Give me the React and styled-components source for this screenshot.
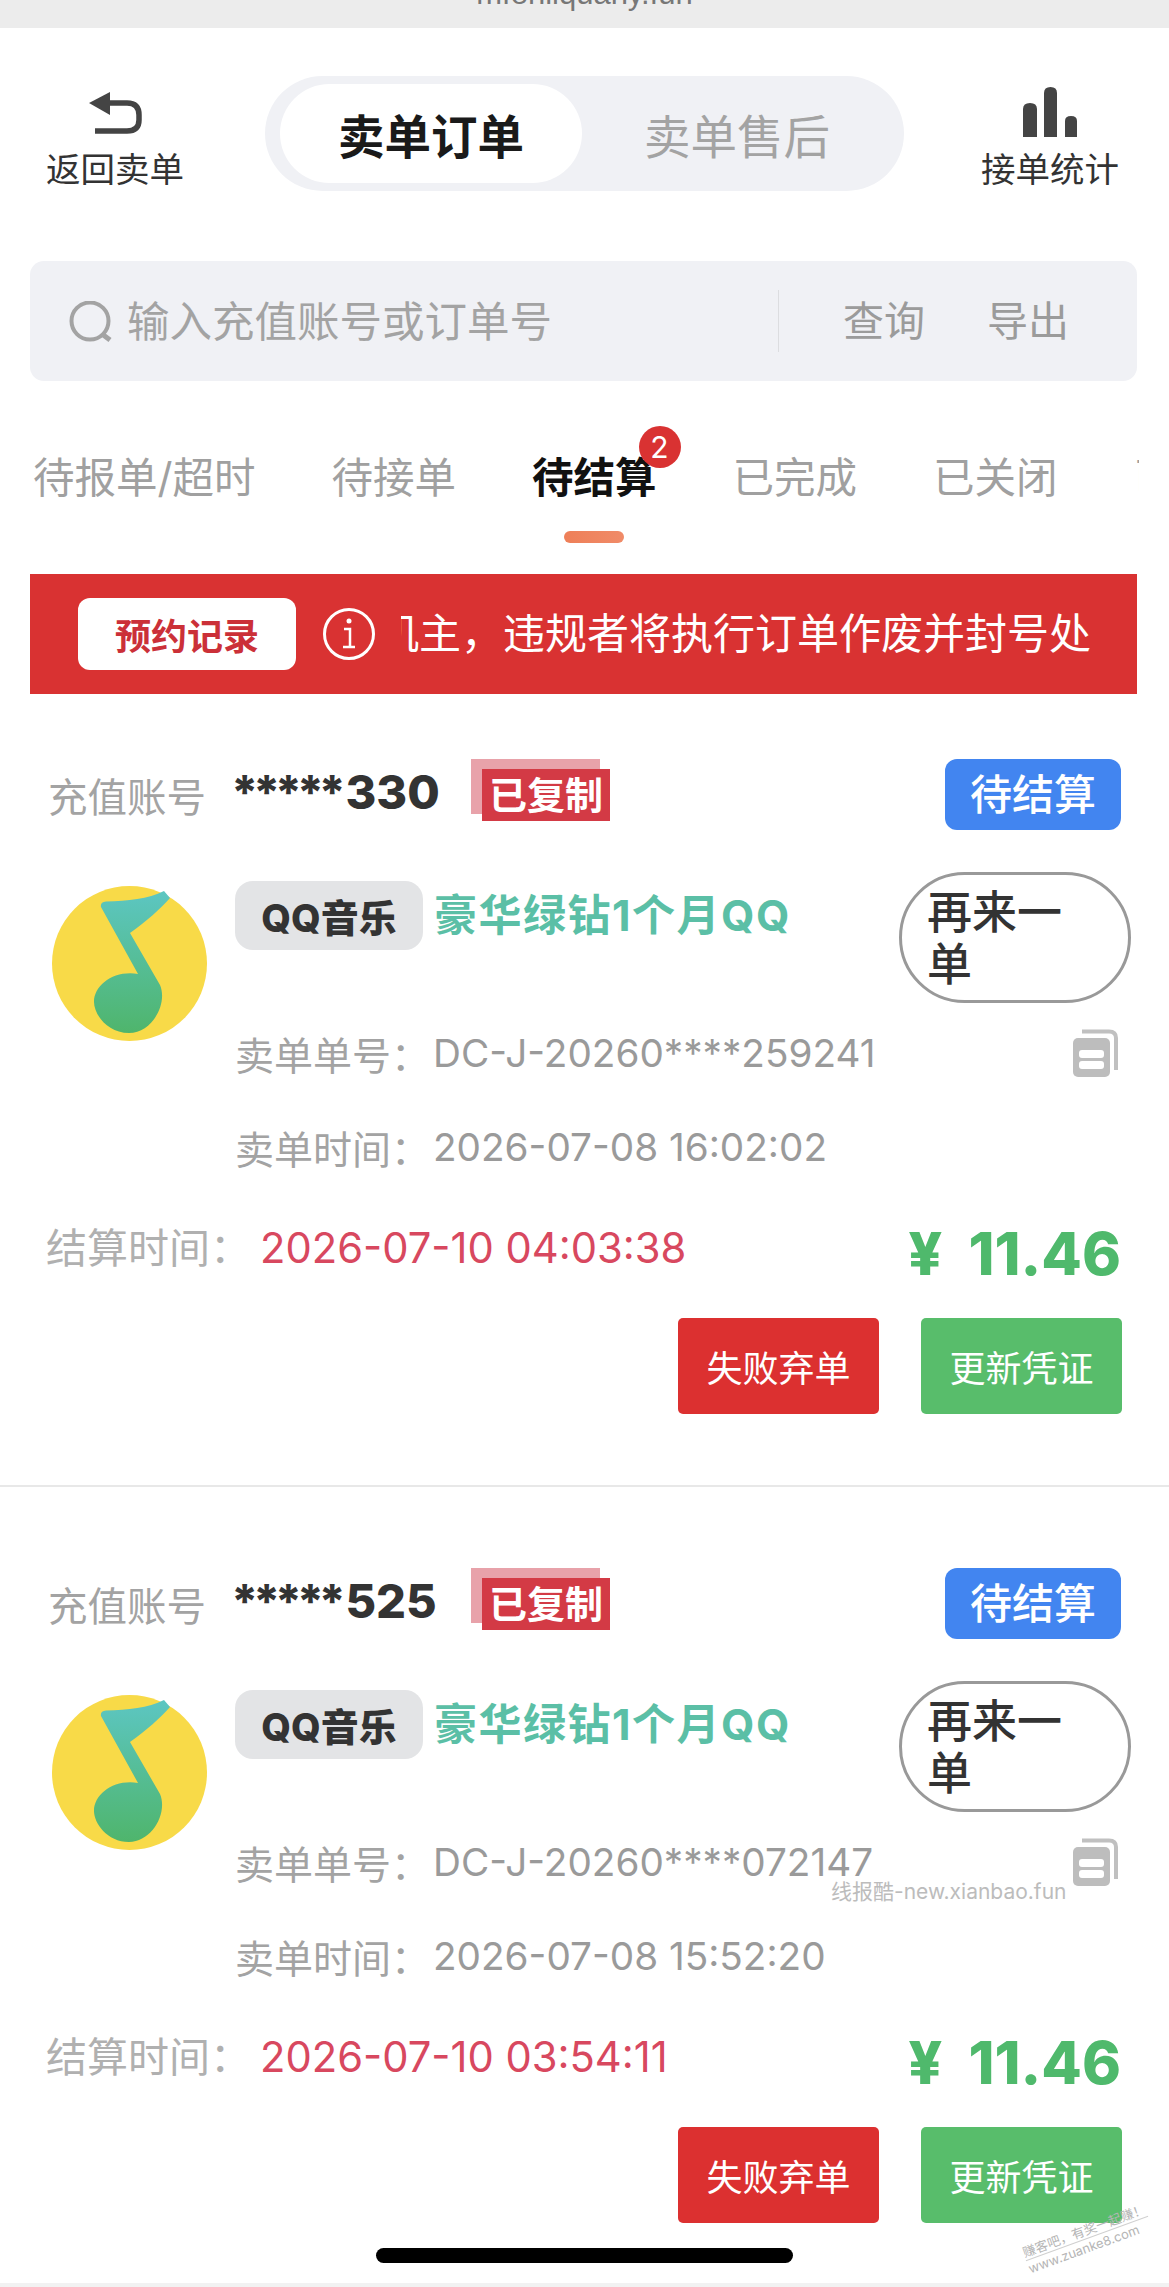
import React from 'react'
import styled, { createGlobalStyle } from 'styled-components'

const GlobalStyle = createGlobalStyle`
  html, body {
    margin: 0;
    padding: 0;
    background: #fff;
  }
  * {
    box-sizing: border-box;
  }
`

const Page = styled.div`
  position: relative;
  isolation: isolate;
  display: flex;
  flex-direction: column;
  width: 1169px;
  height: 2287px;
  overflow: hidden;
  background: #fff;
  color: #333;
  font-family: Inter, "Noto Sans CJK SC", sans-serif;
`

const UrlBar = styled.div`
  height: 28px;
  background: #ececec;
  overflow: hidden;
  text-align: center;
  font-size: 31px;
  line-height: 28px;
  color: #777;
  font-family: "Liberation Sans", sans-serif;

  span {
    display: block;
    margin-top: -20px;
  }
`

const Header = styled.div`
  display: flex;
  margin-top: 48px;
  padding-left: 46px;
`

const HeaderAction = styled.div`
  display: flex;
  flex-direction: column;
  align-items: center;
  flex-shrink: 0;
  width: 138px;
  height: 114px;
  font-size: 34.5px;
  line-height: 40px;
  color: #333;
  white-space: nowrap;
`

const ActionIcon = styled.div`
  display: flex;
  align-items: ${p => (p.$top ? 'flex-start' : 'center')};
  justify-content: center;
  height: ${p => (p.$top ? 77 : 74)}px;
  padding-top: ${p => (p.$top ? 11 : 0)}px;
`

const Segment = styled.div`
  display: flex;
  align-items: center;
  gap: 4px;
  width: 639px;
  height: 115px;
  margin: 0 77px 0 81px;
  padding-left: 15px;
  background: #f0f1f5;
  border-radius: 58px;
`

const SegmentItem = styled.div`
  display: flex;
  align-items: center;
  justify-content: center;
  flex-shrink: 0;
  width: 302px;
  height: 99px;
  border-radius: 50px;
  font-size: 46.5px;
  font-weight: ${p => (p.$active ? 700 : 400)};
  color: ${p => (p.$active ? '#1a1a1a' : '#a3a3a3')};
  background: ${p => (p.$active ? '#fff' : 'transparent')};
`

const SearchBar = styled.div`
  display: flex;
  align-items: center;
  height: 120px;
  margin: 70px 32px 0 30px;
  padding-left: 39px;
  background: #f0f1f5;
  border-radius: 14px;
  font-size: 42.5px;
  color: #a3a3a3;
`

const Placeholder = styled.div`
  width: 651px;
  margin: -6px 0 0 14px;
`

const SearchAction = styled.div`
  margin: -6px 0 0 ${p => p.$gap}px;
  font-size: 41px;
  color: #9b9b9b;
`

const SearchDivider = styled.div`
  width: 1px;
  height: 62px;
  background: #dcdde0;
`

const Tabs = styled.div`
  display: flex;
  gap: 76px;
  margin: 30px 30px 0 30px;
  padding: 42px 0 0 3px;
  overflow: hidden;
`

const Tab = styled.div`
  position: relative;
  display: flex;
  flex-direction: column;
  align-items: center;
  flex-shrink: 0;
  gap: 28px;
  font-size: 41.5px;
  line-height: 50px;
  white-space: nowrap;
  font-weight: ${p => (p.$active ? 700 : 400)};
  color: ${p => (p.$active ? '#111' : '#a0a0a0')};
`

const TabBar = styled.div`
  width: 60px;
  height: 12px;
  border-radius: 6px;
  background: ${p => (p.$active ? 'linear-gradient(90deg, #ee7f58, #f08b68)' : 'transparent')};
`

const TabBadge = styled.div`
  position: absolute;
  top: -27px;
  right: -24px;
  width: 42px;
  height: 42px;
  border-radius: 50%;
  background: #d93232;
  color: #fff;
  font-size: 30px;
  font-weight: 400;
  line-height: 42px;
  text-align: center;
`

const Notice = styled.div`
  display: flex;
  align-items: center;
  height: 120px;
  margin: 31px 32px 0 30px;
  padding-left: 48px;
  background: #d93232;
`

const NoticeButton = styled.div`
  display: flex;
  align-items: center;
  justify-content: center;
  width: 218px;
  height: 72px;
  margin-right: 27px;
  background: #fff;
  border-radius: 12px;
  color: #cb3038;
  font-size: 36px;
  font-weight: 700;
`

const Marquee = styled.div`
  width: 689px;
  margin-left: 26px;
  overflow: hidden;
  white-space: nowrap;
  color: #fff;
  font-size: 42px;
  line-height: 60px;

  span {
    display: block;
    margin-left: -24px;
  }
`

const Card = styled.div`
  padding: 65px 0 71px;
  border-bottom: 2px solid #e8e8e8;

  & + & {
    padding-top: 81px;
    padding-bottom: 0;
    border-bottom: 0;
  }
`

const CardHead = styled.div`
  display: flex;
  align-items: center;
  height: 71px;
  padding: 0 48px;
`

const HeadLabel = styled.div`
  font-size: 39.5px;
  color: #a3a3a3;
`

const Account = styled.div`
  display: flex;
  width: 204px;
  margin: -6px 0 0 25px;
  font-size: 47px;
  font-weight: 800;
  color: #333;
`

const Mask = styled.span`
  letter-spacing: -5.5px;
  margin-right: 5px;
`

const Stamp = styled.div`
  position: relative;
  width: 128px;
  height: 52px;
  margin: 0 0 0 47px;
  background: #d33a45;
  color: #fff;
  font-size: 38px;
  font-weight: 700;
  line-height: 52px;
  text-align: center;
  white-space: nowrap;

  &::before {
    content: '';
    position: absolute;
    z-index: -1;
    top: -10px;
    left: -11px;
    width: 129px;
    height: 55px;
    background: #e8a2aa;
  }
`

const Status = styled.div`
  margin-left: auto;
  width: 176px;
  height: 71px;
  background: #4285f0;
  border-radius: 12px;
  color: #fff;
  font-size: 42px;
  font-weight: 500;
  line-height: 71px;
  text-align: center;
`

const CardBody = styled.div`
  display: flex;
  gap: 28px;
  margin-top: 42px;
  padding: 0 38px 0 52px;
`

const Logo = styled.svg`
  flex-shrink: 0;
  margin-top: 14px;
`

const Info = styled.div`
  flex: 1;
`

const ProductRow = styled.div`
  display: flex;
  align-items: flex-start;
  height: 131px;
`

const Tag = styled.div`
  display: flex;
  align-items: center;
  justify-content: center;
  width: 188px;
  height: 69px;
  margin-top: 9px;
  background: #e3e4e6;
  border-radius: 18px;
  color: #333;
  font-size: 38px;
  font-weight: 800;
`

const Product = styled.div`
  margin: 9px 0 0 11px;
  font-size: 43px;
  font-weight: 700;
  line-height: 69px;
  color: #5bbfa6;
  letter-spacing: 1.5px;
  white-space: nowrap;
`

const Again = styled.div`
  flex-shrink: 0;
  width: 232px;
  height: 131px;
  margin-left: auto;
  padding: 12px 29px 12px 25px;
  border: 3px solid #999;
  border-radius: 66px;
  color: #333;
  font-size: 45px;
  font-weight: 500;
  line-height: 52px;
`

const MetaRow = styled.div`
  display: flex;
  align-items: center;
  height: 94px;
  margin-top: ${p => (p.$first ? 3 : 0)}px;
  font-size: 39px;
  color: #a3a3a3;
`

const MetaValue = styled.div`
  margin-left: 3px;
  font-size: 38.7px;
  color: #9a9a9a;
`

const CopyIcon = styled.svg`
  margin: 0 13px 0 auto;
`

const SettleRow = styled.div`
  display: flex;
  align-items: flex-start;
  height: 84px;
  margin-top: 20px;
  padding: 0 48px 0 46px;
`

const SettleLabel = styled.div`
  font-size: 41px;
  line-height: 68px;
  color: #b0b0b0;
`

const SettleValue = styled.div`
  margin-left: 9px;
  font-size: 41.7px;
  line-height: 68px;
  color: #d8485f;
`

const Price = styled.div`
  display: flex;
  gap: 26px;
  margin-left: auto;
  font-size: 59px;
  font-weight: 800;
  line-height: 80px;
  color: #4fb96c;
`

const Buttons = styled.div`
  display: flex;
  justify-content: flex-end;
  gap: 42px;
  margin-top: 20px;
  padding-right: 47px;
`

const ActionButton = styled.div`
  display: flex;
  align-items: center;
  justify-content: center;
  width: 201px;
  height: 96px;
  border-radius: 5px;
  color: #fff;
  font-size: 36px;
  background: ${p => (p.$danger ? '#dc3030' : '#58bd6b')};
`

const HomeIndicator = styled.div`
  position: absolute;
  left: 376px;
  bottom: 24px;
  width: 417px;
  height: 15px;
  border-radius: 8px;
  background: #000;
`

const BottomStrip = styled.div`
  margin-top: auto;
  height: 4px;
  background: #f2f2f2;
`

const SourceMark = styled.div`
  position: absolute;
  left: 831px;
  top: 1878px;
  font-size: 21px;
  line-height: 28px;
  color: #bcbcbc;
  white-space: nowrap;
`

const CornerMark = styled.div`
  position: absolute;
  left: 1022px;
  top: 2222px;
  width: 130px;
  transform: rotate(-20deg);
  font-size: 13px;
  line-height: 16px;
  color: #b5b5b5;
  white-space: nowrap;

  div:first-child {
    border-bottom: 1px solid #d0d0d0;
  }
`

const BackIcon = () => (
  <svg width="53" height="42" viewBox="0 0 53 42">
    <path d="M0 11 L21 0 V23 Z" fill="#444" />
    <path
      d="M17 11 H38 Q50 11 50 23 V28 Q50 39 38 39 H6"
      fill="none"
      stroke="#444"
      strokeWidth="5.5"
    />
  </svg>
)

const BarsIcon = () => (
  <svg width="55" height="50" viewBox="0 0 55 50">
    <path d="M0 50 V22 Q0 16 7 16 Q14 16 14 22 V50 Z" fill="#444" />
    <path d="M21 50 V6 Q21 0 27.5 0 Q34 0 34 6 V50 Z" fill="#444" />
    <path d="M42 50 V34 Q42 29 48 29 Q54 29 54 34 V50 Z" fill="#444" />
  </svg>
)

const SearchIcon = () => (
  <svg width="44" height="41" viewBox="0 0 44 41">
    <circle cx="21" cy="20" r="18.5" fill="none" stroke="#a3a3a3" strokeWidth="4" />
    <path d="M33 33 L41 39" stroke="#a3a3a3" strokeWidth="5" />
  </svg>
)

const InfoIcon = () => (
  <svg width="52" height="54" viewBox="0 0 52 54">
    <circle cx="26" cy="27" r="24.5" fill="none" stroke="#fff" strokeWidth="3" />
    <circle cx="26" cy="14" r="2.5" fill="#fff" />
    <path d="M21 22 H27 V39 M20 40 H32" fill="none" stroke="#fff" strokeWidth="2.5" />
  </svg>
)

const QQMusicLogo = ({ id }) => (
  <Logo width="155" height="155" viewBox="0 0 155 155">
    <defs>
      <linearGradient id={id} x1="0" y1="5" x2="0" y2="147" gradientUnits="userSpaceOnUse">
        <stop offset="0" stopColor="#5cc6c2" />
        <stop offset="1" stopColor="#4fb56c" />
      </linearGradient>
    </defs>
    <circle cx="77.5" cy="77.5" r="77.5" fill="#f8da48" />
    <path
      d="M49 21 Q48 16 54 15.5 C76 15 96 13 112 5 L118 12 C108 23 95 35 78 47 L108 99 C116 118 100 147 77 147 C55 147 42 128 42 116 C42 99 62 84 86 88 Z"
      fill={`url(#${id})`}
    />
  </Logo>
)

const CopyGlyph = () => (
  <CopyIcon width="45" height="48" viewBox="0 0 45 48">
    <path d="M9 2.5 H36 Q43 2.5 43 9 V41" fill="none" stroke="#c0c0c0" strokeWidth="4" />
    <rect x="0" y="9" width="37" height="39" rx="5" fill="#bdbdbd" />
    <rect x="6" y="21" width="25" height="8" rx="3" fill="#fff" />
    <rect x="6" y="32" width="25" height="8" rx="3" fill="#fff" />
  </CopyIcon>
)

const orders = [
  {
    account: '330',
    no: 'DC-J-20260****259241',
    time: '2026-07-08 16:02:02',
    settle: '2026-07-10 04:03:38'
  },
  {
    account: '525',
    no: 'DC-J-20260****072147',
    time: '2026-07-08 15:52:20',
    settle: '2026-07-10 03:54:11'
  }
]

const tabs = ['待报单/超时', '待接单', '待结算', '已完成', '已关闭', '已取消']

const Order = ({ order, index }) => (
  <Card>
    <CardHead>
      <HeadLabel>充值账号</HeadLabel>
      <Account>
        <Mask>*****</Mask>
        {order.account}
      </Account>
      <Stamp>已复制</Stamp>
      <Status>待结算</Status>
    </CardHead>
    <CardBody>
      <QQMusicLogo id={`note-${index}`} />
      <Info>
        <ProductRow>
          <Tag>QQ音乐</Tag>
          <Product>豪华绿钻1个月QQ</Product>
          <Again>再来一单</Again>
        </ProductRow>
        <MetaRow $first>
          卖单单号：
          <MetaValue>{order.no}</MetaValue>
          <CopyGlyph />
        </MetaRow>
        <MetaRow>
          卖单时间：
          <MetaValue>{order.time}</MetaValue>
        </MetaRow>
      </Info>
    </CardBody>
    <SettleRow>
      <SettleLabel>结算时间：</SettleLabel>
      <SettleValue>{order.settle}</SettleValue>
      <Price>
        <span>¥</span>
        <span>11.46</span>
      </Price>
    </SettleRow>
    <Buttons>
      <ActionButton $danger>失败弃单</ActionButton>
      <ActionButton>更新凭证</ActionButton>
    </Buttons>
  </Card>
)

export default function App() {
  return (
    <Page>
      <GlobalStyle />
      <UrlBar>
        <span>mfenliquany.fun</span>
      </UrlBar>
      <Header>
        <HeaderAction>
          <ActionIcon>
            <BackIcon />
          </ActionIcon>
          返回卖单
        </HeaderAction>
        <Segment>
          <SegmentItem $active>卖单订单</SegmentItem>
          <SegmentItem>卖单售后</SegmentItem>
        </Segment>
        <HeaderAction>
          <ActionIcon $top>
            <BarsIcon />
          </ActionIcon>
          接单统计
        </HeaderAction>
      </Header>
      <SearchBar>
        <SearchIcon />
        <Placeholder>输入充值账号或订单号</Placeholder>
        <SearchDivider />
        <SearchAction $gap={64}>查询</SearchAction>
        <SearchAction $gap={62}>导出</SearchAction>
      </SearchBar>
      <Tabs>
        {tabs.map(tab => (
          <Tab key={tab} $active={tab === '待结算'}>
            {tab}
            <TabBar $active={tab === '待结算'} />
            {tab === '待结算' && <TabBadge>2</TabBadge>}
          </Tab>
        ))}
      </Tabs>
      <Notice>
        <NoticeButton>预约记录</NoticeButton>
        <InfoIcon />
        <Marquee>
          <span>机主，违规者将执行订单作废并封号处理</span>
        </Marquee>
      </Notice>
      {orders.map((order, i) => (
        <Order key={order.account} order={order} index={i} />
      ))}
      <BottomStrip />
      <HomeIndicator />
      <SourceMark>线报酷-new.xianbao.fun</SourceMark>
      <CornerMark>
        <div>赚客吧，有奖一起赚！</div>
        <div>www.zuanke8.com</div>
      </CornerMark>
    </Page>
  )
}
